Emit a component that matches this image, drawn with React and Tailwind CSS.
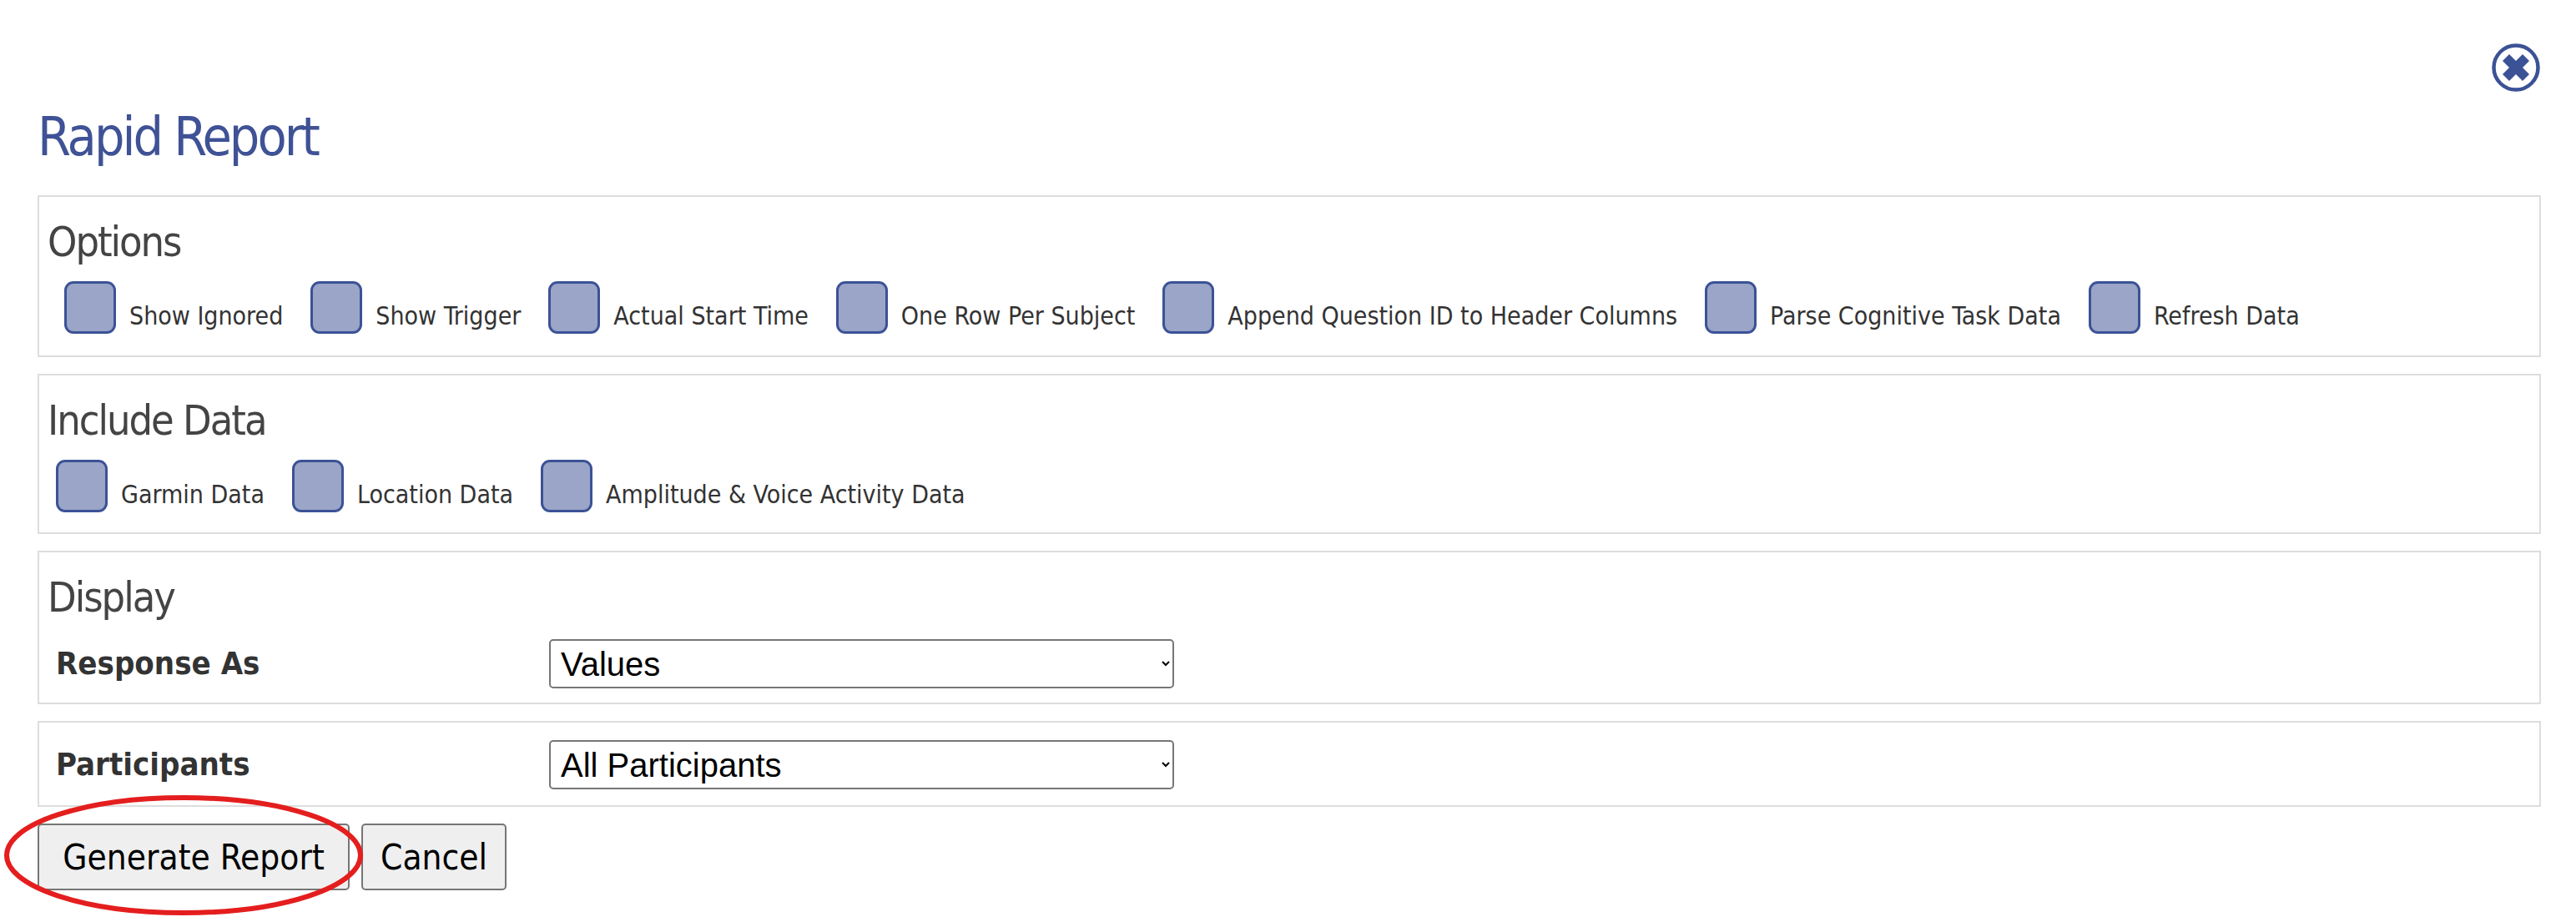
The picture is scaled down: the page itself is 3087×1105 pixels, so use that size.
import React from 'react';

const options = ['Show Ignored', 'Show Trigger', 'Actual Start Time', 'One Row Per Subject', 'Append Question ID to Header Columns', 'Parse Cognitive Task Data', 'Refresh Data'];
const includes = ['Garmin Data', 'Location Data', 'Amplitude & Voice Activity Data'];

const CheckItem = ({ label }) => (
  <label className="flex items-end gap-[16px]">
    <input type="checkbox" className="appearance-none w-[62px] h-[63px] rounded-[11px] border-[3px] border-[#3b5296] bg-[#9aa5c7]" />
    <span className="text-[30px] leading-[36px] text-[#333333] pb-[3px]">{label}</span>
  </label>
);

const Panel = ({ className, children }) => (
  <div className={`border-2 border-[#dddddd] px-[10px] ${className}`}>{children}</div>
);

const Heading = ({ children }) => (
  <h3 className="text-[50px] leading-[60px] text-[#444444] tracking-[-2px]">{children}</h3>
);

const Row = ({ label, value }) => (
  <div className="flex items-center pl-[10px]">
    <span className="w-[591px] text-[38px] font-bold text-[#333333]">{label}</span>
    <select defaultValue={value} className="w-[749px] h-[59px] pl-[8px] bg-white border-2 border-[#767676] rounded-[5px] text-[40px] text-black font-['Liberation_Sans',sans-serif]">
      <option>{value}</option>
    </select>
  </div>
);

export default function App() {
  return (
    <div className="relative h-[1105px] bg-white pl-[45px] pr-[42px] overflow-hidden font-['DejaVu_Sans_Condensed','DejaVu_Sans',sans-serif]">
      {/* Close button */}
      <div className="flex justify-end pt-[52px] pr-[1px] h-[124px]">
        <svg width="58" height="58" viewBox="0 0 58 58">
          <circle cx="29" cy="29" r="26.5" fill="white" stroke="#3b5296" strokeWidth="4.5" />
          <path d="M13 21l8-8 8 8 8-8 8 8-8 8 8 8-8 8-8-8-8 8-8-8 8-8z" fill="#3b5296" />
        </svg>
      </div>

      <h1 className="text-[64px] leading-[80px] text-[#3f5296] tracking-[-3px] mb-[25px] h-[85px]">Rapid Report</h1>

      <Panel className="h-[194px] pt-[24px]">
        <Heading>Options</Heading>
        <div className="flex gap-[33px] mt-[17px] pl-[20px]">
          {options.map(o => <CheckItem key={o} label={o} />)}
        </div>
      </Panel>

      <Panel className="h-[192px] mt-[20px] pt-[24px]">
        <Heading>Include Data</Heading>
        <div className="flex gap-[33px] mt-[17px] pl-[10px]">
          {includes.map(o => <CheckItem key={o} label={o} />)}
        </div>
      </Panel>

      <Panel className="h-[184px] mt-[20px] pt-[24px]">
        <Heading>Display</Heading>
        <div className="mt-[20px]"><Row label="Response As" value="Values" /></div>
      </Panel>

      <Panel className="h-[103px] mt-[20px] pt-[21px]">
        <Row label="Participants" value="All Participants" />
      </Panel>

      <div className="flex gap-[14px] mt-[20px]">
        <button className="h-[80px] w-[374px] bg-[#efefef] border-2 border-[#767676] rounded-[5px] text-[42px] text-black">Generate Report</button>
        <button className="h-[80px] w-[174px] bg-[#efefef] border-2 border-[#767676] rounded-[5px] text-[42px] text-black">Cancel</button>
      </div>

      {/* Red annotation ring */}
      <svg className="absolute left-[3px] top-[952px]" width="434" height="146" viewBox="0 0 434 146">
        <ellipse cx="217" cy="73" rx="212" ry="69" fill="none" stroke="#e41e1e" strokeWidth="6" />
      </svg>
    </div>
  );
}
